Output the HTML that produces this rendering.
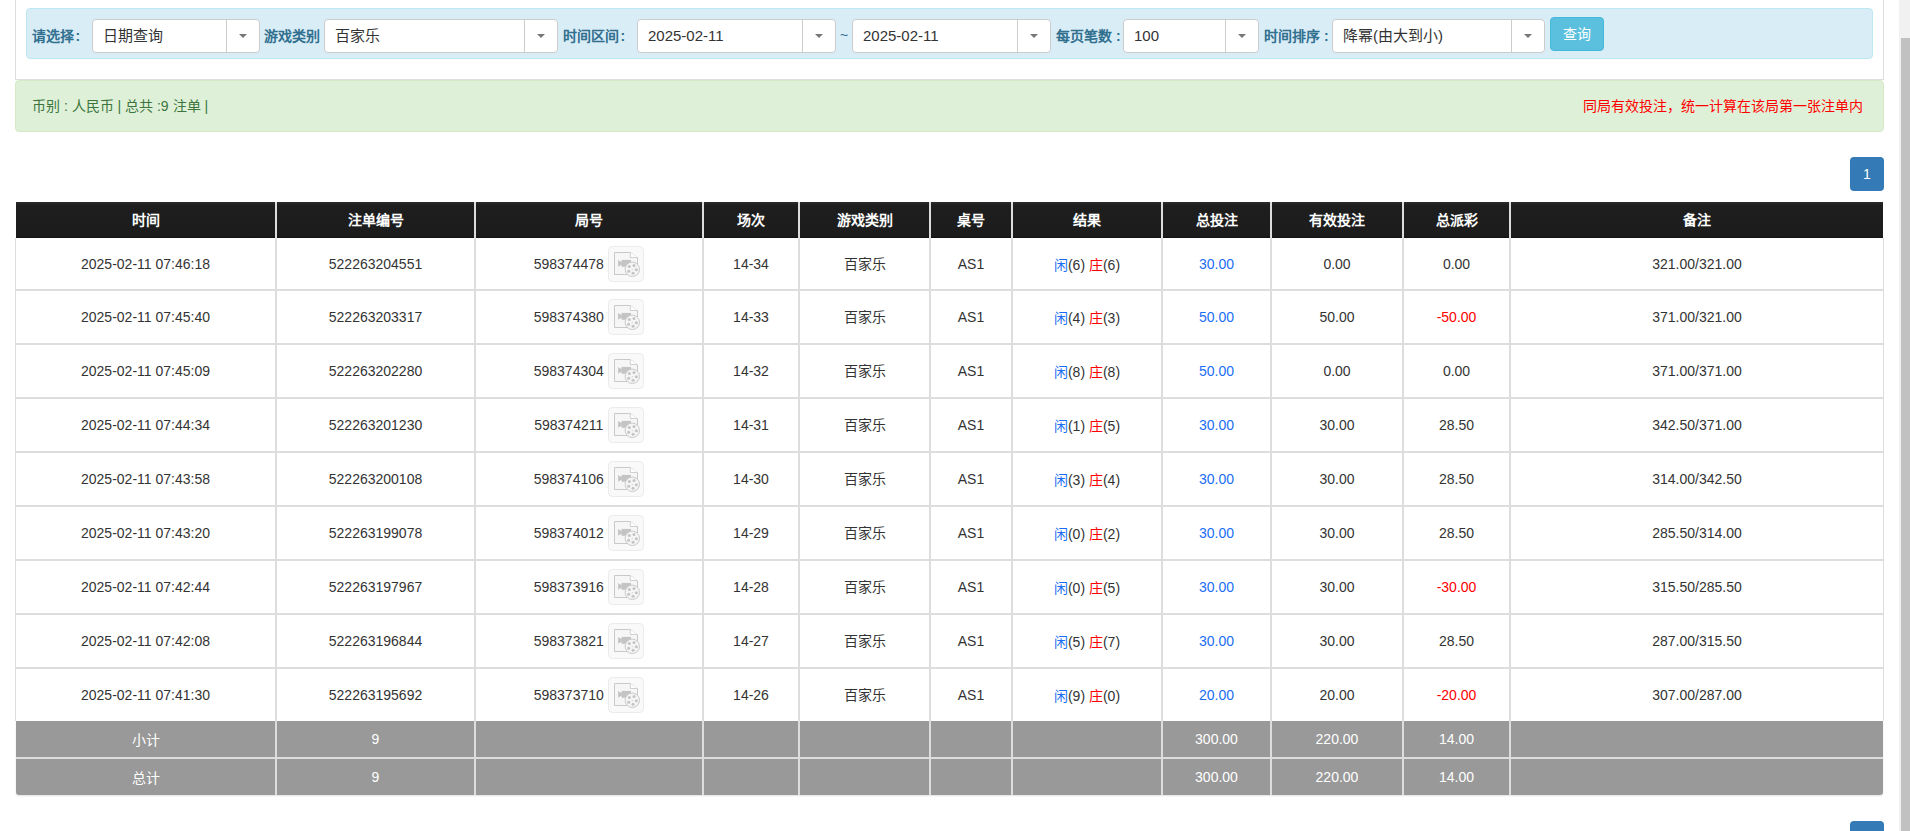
<!DOCTYPE html>
<html lang="zh-CN"><head><meta charset="utf-8"><title>注单</title>
<style>
html,body{margin:0;padding:0;background:#fff;overflow:hidden;width:1910px;height:831px;}
body{font-family:"Liberation Sans",sans-serif;font-size:14px;color:#333;position:relative;}
.a{position:absolute;box-sizing:border-box;}
.lbl{position:absolute;font-weight:bold;color:#31708f;font-size:14px;line-height:20px;white-space:nowrap;}
.lbl i{font-style:normal;margin-left:1.5px;}
.sel{position:absolute;box-sizing:border-box;background:#fff;border:1px solid #ccc;border-radius:4px;height:34px;}
.sel .t{position:absolute;left:10px;top:7px;font-size:15px;line-height:18px;color:#333;white-space:nowrap;}
.sel .dv{position:absolute;top:0;bottom:0;width:1px;background:#ccc;}
.sel .ar{position:absolute;top:14px;width:0;height:0;border-left:4px solid transparent;border-right:4px solid transparent;border-top:4px solid #777;}
.cell{position:absolute;display:flex;align-items:center;justify-content:center;white-space:nowrap;}
.hd{color:#fff;font-weight:bold;}
.up{font-style:normal;position:relative;top:-1px;}
.fx{display:flex;align-items:center;font-weight:normal;}
.vl{position:absolute;background:#ddd;}
.bl{color:#1a6ef5;}
.rd{color:#f00;}
.ft{color:#fff;}
.ico{display:inline-block;width:36px;height:36px;margin-left:4.5px;position:relative;vertical-align:middle;}
.ico svg{position:absolute;left:0;top:0;}
</style></head><body>

<div class="a" style="left:1899px;top:0;width:11px;height:831px;background:#f1f1f1;"></div>
<div class="a" style="left:1901px;top:38px;width:9px;height:793px;background:#c1c1c1;"></div>
<div class="a" style="left:15px;top:-5px;width:1869px;height:85px;border:1px solid #ddd;border-top:none;"></div>
<div class="a" style="left:26px;top:8px;width:1847px;height:51px;background:#d9edf7;border:1px solid #bce8f1;border-radius:4px;"></div>
<div class="lbl" style="left:32px;top:26px;">请选择<i>:</i></div>
<div class="lbl" style="left:264px;top:26px;">游戏类别</div>
<div class="lbl" style="left:563px;top:26px;">时间区间<i>:</i></div>
<div class="a" style="left:840px;top:25px;color:#31708f;line-height:20px;">~</div>
<div class="lbl" style="left:1056px;top:26px;">每页笔数 :</div>
<div class="lbl" style="left:1264px;top:26px;">时间排序 :</div>
<div class="sel" style="left:92px;top:19px;width:168px;"><span class="t">日期查询</span><span class="dv" style="left:133px"></span><span class="ar" style="left:146px"></span></div>
<div class="sel" style="left:324px;top:19px;width:234px;"><span class="t">百家乐</span><span class="dv" style="left:199px"></span><span class="ar" style="left:212px"></span></div>
<div class="sel" style="left:637px;top:19px;width:199px;"><span class="t">2025-02-11</span><span class="dv" style="left:164px"></span><span class="ar" style="left:177px"></span></div>
<div class="sel" style="left:852px;top:19px;width:199px;"><span class="t">2025-02-11</span><span class="dv" style="left:164px"></span><span class="ar" style="left:177px"></span></div>
<div class="sel" style="left:1123px;top:19px;width:136px;"><span class="t">100</span><span class="dv" style="left:101px"></span><span class="ar" style="left:114px"></span></div>
<div class="sel" style="left:1332px;top:19px;width:213px;"><span class="t">降幂(由大到小)</span><span class="dv" style="left:178px"></span><span class="ar" style="left:191px"></span></div>
<div class="a" style="left:1550px;top:17px;width:54px;height:34px;background:#5bc0de;border:1px solid #46b8da;border-radius:4px;color:#fff;font-size:14px;line-height:32px;text-align:center;">查询</div>
<div class="a" style="left:15px;top:80px;width:1869px;height:52px;background:#dff0d8;border:1px solid #d6e9c6;border-radius:4px;"></div>
<div class="a" style="left:32px;top:96px;color:#3c763d;line-height:20px;white-space:nowrap;">币别 : 人民币 | 总共 :9 注单 |</div>
<div class="a" style="left:1583px;top:96px;color:#f00;line-height:20px;white-space:nowrap;">同局有效投注，统一计算在该局第一张注单内</div>
<div class="a" style="left:1850px;top:157px;width:34px;height:34px;background:#337ab7;border-radius:4px;color:#fff;line-height:34px;text-align:center;">1</div>
<div class="a" style="left:1850px;top:821px;width:34px;height:34px;background:#337ab7;border-radius:4px;color:#fff;line-height:34px;text-align:center;">1</div>
<div class="a" style="left:16px;top:202px;width:1867px;height:36px;background:linear-gradient(#2c2c2c 0,#1e1e1e 3px,#1c1c1c 34px,#101010 36px);"></div>
<div class="a" style="left:16px;top:721px;width:1867px;height:74px;background:#999;border-radius:0 0 3px 3px;box-shadow:0 1px 2px rgba(0,0,0,.12);"></div>
<div class="vl" style="left:16px;top:289px;width:1867px;height:2px;"></div>
<div class="vl" style="left:16px;top:343px;width:1867px;height:2px;"></div>
<div class="vl" style="left:16px;top:397px;width:1867px;height:2px;"></div>
<div class="vl" style="left:16px;top:451px;width:1867px;height:2px;"></div>
<div class="vl" style="left:16px;top:505px;width:1867px;height:2px;"></div>
<div class="vl" style="left:16px;top:559px;width:1867px;height:2px;"></div>
<div class="vl" style="left:16px;top:613px;width:1867px;height:2px;"></div>
<div class="vl" style="left:16px;top:667px;width:1867px;height:2px;"></div>
<div class="vl" style="left:16px;top:757px;width:1867px;height:2px;"></div>
<div class="vl" style="left:15px;top:238px;width:1px;height:483px;"></div>
<div class="vl" style="left:275px;top:202px;width:2px;height:593px;"></div>
<div class="vl" style="left:474px;top:202px;width:2px;height:593px;"></div>
<div class="vl" style="left:702px;top:202px;width:2px;height:593px;"></div>
<div class="vl" style="left:798px;top:202px;width:2px;height:593px;"></div>
<div class="vl" style="left:929px;top:202px;width:2px;height:593px;"></div>
<div class="vl" style="left:1011px;top:202px;width:2px;height:593px;"></div>
<div class="vl" style="left:1161px;top:202px;width:2px;height:593px;"></div>
<div class="vl" style="left:1270px;top:202px;width:2px;height:593px;"></div>
<div class="vl" style="left:1402px;top:202px;width:2px;height:593px;"></div>
<div class="vl" style="left:1509px;top:202px;width:2px;height:593px;"></div>
<div class="vl" style="left:1883px;top:238px;width:1px;height:483px;"></div>
<div class="cell hd" style="left:16px;top:201px;width:259px;height:36px;">时间</div>
<div class="cell hd" style="left:277px;top:201px;width:197px;height:36px;">注单编号</div>
<div class="cell hd" style="left:476px;top:201px;width:226px;height:36px;">局号</div>
<div class="cell hd" style="left:704px;top:201px;width:94px;height:36px;">场次</div>
<div class="cell hd" style="left:800px;top:201px;width:129px;height:36px;">游戏类别</div>
<div class="cell hd" style="left:931px;top:201px;width:80px;height:36px;">桌号</div>
<div class="cell hd" style="left:1013px;top:201px;width:148px;height:36px;">结果</div>
<div class="cell hd" style="left:1163px;top:201px;width:107px;height:36px;">总投注</div>
<div class="cell hd" style="left:1272px;top:201px;width:130px;height:36px;">有效投注</div>
<div class="cell hd" style="left:1404px;top:201px;width:105px;height:36px;">总派彩</div>
<div class="cell hd" style="left:1511px;top:201px;width:372px;height:36px;">备注</div>
<div class="cell" style="left:16px;top:238px;width:259px;height:51px;"><span>2025-02-11 07:46:18</span></div>
<div class="cell" style="left:277px;top:238px;width:197px;height:51px;"><span>522263204551</span></div>
<div class="cell" style="left:476px;top:238px;width:226px;height:51px;"><span><b class="fx">598374478<span class="ico"><svg width="36" height="36" viewBox="0 0 36 36"><rect x="0.5" y="0.5" width="35" height="35" rx="4" fill="#f9f9f9" stroke="#ebebeb"/><path d="M6.5 6.5H22.3L29.5 11.9V28.5H6.5Z" fill="#f6f6f6" stroke="#c9c9c9"/><path d="M22.3 6.5V11.5H29.5" fill="#fff" stroke="#cfcfcf"/><rect x="13.6" y="13.9" width="9.4" height="6.9" fill="#c4c4c4"/><path d="M10.1 14.1L12.3 15.6H13.8V19.2H12.3L10.1 20.7Z" fill="#c4c4c4"/><circle cx="24.3" cy="23.3" r="7.2" fill="#f5f5f5" stroke="#cacaca"/><circle cx="21.30" cy="20.50" r="1.5" fill="#c4c4c4"/><circle cx="26.03" cy="19.58" r="1.5" fill="#c4c4c4"/><circle cx="28.37" cy="23.80" r="1.5" fill="#c4c4c4"/><circle cx="25.08" cy="27.32" r="1.5" fill="#c4c4c4"/><circle cx="20.71" cy="25.29" r="1.5" fill="#c4c4c4"/><rect x="23.6" y="23" width="1.4" height="0.8" fill="#ccc"/></svg></span></b></span></div>
<div class="cell" style="left:704px;top:238px;width:94px;height:51px;"><span>14-34</span></div>
<div class="cell" style="left:800px;top:238px;width:129px;height:51px;"><span><i class="up">百家乐</i></span></div>
<div class="cell" style="left:931px;top:238px;width:80px;height:51px;"><span>AS1</span></div>
<div class="cell" style="left:1013px;top:238px;width:148px;height:51px;"><span><span class="bl">闲</span>(6) <span class="rd">庄</span>(6)</span></div>
<div class="cell" style="left:1163px;top:238px;width:107px;height:51px;"><span><span class="bl">30.00</span></span></div>
<div class="cell" style="left:1272px;top:238px;width:130px;height:51px;"><span>0.00</span></div>
<div class="cell" style="left:1404px;top:238px;width:105px;height:51px;"><span>0.00</span></div>
<div class="cell" style="left:1511px;top:238px;width:372px;height:51px;"><span>321.00/321.00</span></div>
<div class="cell" style="left:16px;top:291px;width:259px;height:52px;"><span>2025-02-11 07:45:40</span></div>
<div class="cell" style="left:277px;top:291px;width:197px;height:52px;"><span>522263203317</span></div>
<div class="cell" style="left:476px;top:291px;width:226px;height:52px;"><span><b class="fx">598374380<span class="ico"><svg width="36" height="36" viewBox="0 0 36 36"><rect x="0.5" y="0.5" width="35" height="35" rx="4" fill="#f9f9f9" stroke="#ebebeb"/><path d="M6.5 6.5H22.3L29.5 11.9V28.5H6.5Z" fill="#f6f6f6" stroke="#c9c9c9"/><path d="M22.3 6.5V11.5H29.5" fill="#fff" stroke="#cfcfcf"/><rect x="13.6" y="13.9" width="9.4" height="6.9" fill="#c4c4c4"/><path d="M10.1 14.1L12.3 15.6H13.8V19.2H12.3L10.1 20.7Z" fill="#c4c4c4"/><circle cx="24.3" cy="23.3" r="7.2" fill="#f5f5f5" stroke="#cacaca"/><circle cx="21.30" cy="20.50" r="1.5" fill="#c4c4c4"/><circle cx="26.03" cy="19.58" r="1.5" fill="#c4c4c4"/><circle cx="28.37" cy="23.80" r="1.5" fill="#c4c4c4"/><circle cx="25.08" cy="27.32" r="1.5" fill="#c4c4c4"/><circle cx="20.71" cy="25.29" r="1.5" fill="#c4c4c4"/><rect x="23.6" y="23" width="1.4" height="0.8" fill="#ccc"/></svg></span></b></span></div>
<div class="cell" style="left:704px;top:291px;width:94px;height:52px;"><span>14-33</span></div>
<div class="cell" style="left:800px;top:291px;width:129px;height:52px;"><span><i class="up">百家乐</i></span></div>
<div class="cell" style="left:931px;top:291px;width:80px;height:52px;"><span>AS1</span></div>
<div class="cell" style="left:1013px;top:291px;width:148px;height:52px;"><span><span class="bl">闲</span>(4) <span class="rd">庄</span>(3)</span></div>
<div class="cell" style="left:1163px;top:291px;width:107px;height:52px;"><span><span class="bl">50.00</span></span></div>
<div class="cell" style="left:1272px;top:291px;width:130px;height:52px;"><span>50.00</span></div>
<div class="cell" style="left:1404px;top:291px;width:105px;height:52px;"><span><span class="rd">-50.00</span></span></div>
<div class="cell" style="left:1511px;top:291px;width:372px;height:52px;"><span>371.00/321.00</span></div>
<div class="cell" style="left:16px;top:345px;width:259px;height:52px;"><span>2025-02-11 07:45:09</span></div>
<div class="cell" style="left:277px;top:345px;width:197px;height:52px;"><span>522263202280</span></div>
<div class="cell" style="left:476px;top:345px;width:226px;height:52px;"><span><b class="fx">598374304<span class="ico"><svg width="36" height="36" viewBox="0 0 36 36"><rect x="0.5" y="0.5" width="35" height="35" rx="4" fill="#f9f9f9" stroke="#ebebeb"/><path d="M6.5 6.5H22.3L29.5 11.9V28.5H6.5Z" fill="#f6f6f6" stroke="#c9c9c9"/><path d="M22.3 6.5V11.5H29.5" fill="#fff" stroke="#cfcfcf"/><rect x="13.6" y="13.9" width="9.4" height="6.9" fill="#c4c4c4"/><path d="M10.1 14.1L12.3 15.6H13.8V19.2H12.3L10.1 20.7Z" fill="#c4c4c4"/><circle cx="24.3" cy="23.3" r="7.2" fill="#f5f5f5" stroke="#cacaca"/><circle cx="21.30" cy="20.50" r="1.5" fill="#c4c4c4"/><circle cx="26.03" cy="19.58" r="1.5" fill="#c4c4c4"/><circle cx="28.37" cy="23.80" r="1.5" fill="#c4c4c4"/><circle cx="25.08" cy="27.32" r="1.5" fill="#c4c4c4"/><circle cx="20.71" cy="25.29" r="1.5" fill="#c4c4c4"/><rect x="23.6" y="23" width="1.4" height="0.8" fill="#ccc"/></svg></span></b></span></div>
<div class="cell" style="left:704px;top:345px;width:94px;height:52px;"><span>14-32</span></div>
<div class="cell" style="left:800px;top:345px;width:129px;height:52px;"><span><i class="up">百家乐</i></span></div>
<div class="cell" style="left:931px;top:345px;width:80px;height:52px;"><span>AS1</span></div>
<div class="cell" style="left:1013px;top:345px;width:148px;height:52px;"><span><span class="bl">闲</span>(8) <span class="rd">庄</span>(8)</span></div>
<div class="cell" style="left:1163px;top:345px;width:107px;height:52px;"><span><span class="bl">50.00</span></span></div>
<div class="cell" style="left:1272px;top:345px;width:130px;height:52px;"><span>0.00</span></div>
<div class="cell" style="left:1404px;top:345px;width:105px;height:52px;"><span>0.00</span></div>
<div class="cell" style="left:1511px;top:345px;width:372px;height:52px;"><span>371.00/371.00</span></div>
<div class="cell" style="left:16px;top:399px;width:259px;height:52px;"><span>2025-02-11 07:44:34</span></div>
<div class="cell" style="left:277px;top:399px;width:197px;height:52px;"><span>522263201230</span></div>
<div class="cell" style="left:476px;top:399px;width:226px;height:52px;"><span><b class="fx">598374211<span class="ico"><svg width="36" height="36" viewBox="0 0 36 36"><rect x="0.5" y="0.5" width="35" height="35" rx="4" fill="#f9f9f9" stroke="#ebebeb"/><path d="M6.5 6.5H22.3L29.5 11.9V28.5H6.5Z" fill="#f6f6f6" stroke="#c9c9c9"/><path d="M22.3 6.5V11.5H29.5" fill="#fff" stroke="#cfcfcf"/><rect x="13.6" y="13.9" width="9.4" height="6.9" fill="#c4c4c4"/><path d="M10.1 14.1L12.3 15.6H13.8V19.2H12.3L10.1 20.7Z" fill="#c4c4c4"/><circle cx="24.3" cy="23.3" r="7.2" fill="#f5f5f5" stroke="#cacaca"/><circle cx="21.30" cy="20.50" r="1.5" fill="#c4c4c4"/><circle cx="26.03" cy="19.58" r="1.5" fill="#c4c4c4"/><circle cx="28.37" cy="23.80" r="1.5" fill="#c4c4c4"/><circle cx="25.08" cy="27.32" r="1.5" fill="#c4c4c4"/><circle cx="20.71" cy="25.29" r="1.5" fill="#c4c4c4"/><rect x="23.6" y="23" width="1.4" height="0.8" fill="#ccc"/></svg></span></b></span></div>
<div class="cell" style="left:704px;top:399px;width:94px;height:52px;"><span>14-31</span></div>
<div class="cell" style="left:800px;top:399px;width:129px;height:52px;"><span><i class="up">百家乐</i></span></div>
<div class="cell" style="left:931px;top:399px;width:80px;height:52px;"><span>AS1</span></div>
<div class="cell" style="left:1013px;top:399px;width:148px;height:52px;"><span><span class="bl">闲</span>(1) <span class="rd">庄</span>(5)</span></div>
<div class="cell" style="left:1163px;top:399px;width:107px;height:52px;"><span><span class="bl">30.00</span></span></div>
<div class="cell" style="left:1272px;top:399px;width:130px;height:52px;"><span>30.00</span></div>
<div class="cell" style="left:1404px;top:399px;width:105px;height:52px;"><span>28.50</span></div>
<div class="cell" style="left:1511px;top:399px;width:372px;height:52px;"><span>342.50/371.00</span></div>
<div class="cell" style="left:16px;top:453px;width:259px;height:52px;"><span>2025-02-11 07:43:58</span></div>
<div class="cell" style="left:277px;top:453px;width:197px;height:52px;"><span>522263200108</span></div>
<div class="cell" style="left:476px;top:453px;width:226px;height:52px;"><span><b class="fx">598374106<span class="ico"><svg width="36" height="36" viewBox="0 0 36 36"><rect x="0.5" y="0.5" width="35" height="35" rx="4" fill="#f9f9f9" stroke="#ebebeb"/><path d="M6.5 6.5H22.3L29.5 11.9V28.5H6.5Z" fill="#f6f6f6" stroke="#c9c9c9"/><path d="M22.3 6.5V11.5H29.5" fill="#fff" stroke="#cfcfcf"/><rect x="13.6" y="13.9" width="9.4" height="6.9" fill="#c4c4c4"/><path d="M10.1 14.1L12.3 15.6H13.8V19.2H12.3L10.1 20.7Z" fill="#c4c4c4"/><circle cx="24.3" cy="23.3" r="7.2" fill="#f5f5f5" stroke="#cacaca"/><circle cx="21.30" cy="20.50" r="1.5" fill="#c4c4c4"/><circle cx="26.03" cy="19.58" r="1.5" fill="#c4c4c4"/><circle cx="28.37" cy="23.80" r="1.5" fill="#c4c4c4"/><circle cx="25.08" cy="27.32" r="1.5" fill="#c4c4c4"/><circle cx="20.71" cy="25.29" r="1.5" fill="#c4c4c4"/><rect x="23.6" y="23" width="1.4" height="0.8" fill="#ccc"/></svg></span></b></span></div>
<div class="cell" style="left:704px;top:453px;width:94px;height:52px;"><span>14-30</span></div>
<div class="cell" style="left:800px;top:453px;width:129px;height:52px;"><span><i class="up">百家乐</i></span></div>
<div class="cell" style="left:931px;top:453px;width:80px;height:52px;"><span>AS1</span></div>
<div class="cell" style="left:1013px;top:453px;width:148px;height:52px;"><span><span class="bl">闲</span>(3) <span class="rd">庄</span>(4)</span></div>
<div class="cell" style="left:1163px;top:453px;width:107px;height:52px;"><span><span class="bl">30.00</span></span></div>
<div class="cell" style="left:1272px;top:453px;width:130px;height:52px;"><span>30.00</span></div>
<div class="cell" style="left:1404px;top:453px;width:105px;height:52px;"><span>28.50</span></div>
<div class="cell" style="left:1511px;top:453px;width:372px;height:52px;"><span>314.00/342.50</span></div>
<div class="cell" style="left:16px;top:507px;width:259px;height:52px;"><span>2025-02-11 07:43:20</span></div>
<div class="cell" style="left:277px;top:507px;width:197px;height:52px;"><span>522263199078</span></div>
<div class="cell" style="left:476px;top:507px;width:226px;height:52px;"><span><b class="fx">598374012<span class="ico"><svg width="36" height="36" viewBox="0 0 36 36"><rect x="0.5" y="0.5" width="35" height="35" rx="4" fill="#f9f9f9" stroke="#ebebeb"/><path d="M6.5 6.5H22.3L29.5 11.9V28.5H6.5Z" fill="#f6f6f6" stroke="#c9c9c9"/><path d="M22.3 6.5V11.5H29.5" fill="#fff" stroke="#cfcfcf"/><rect x="13.6" y="13.9" width="9.4" height="6.9" fill="#c4c4c4"/><path d="M10.1 14.1L12.3 15.6H13.8V19.2H12.3L10.1 20.7Z" fill="#c4c4c4"/><circle cx="24.3" cy="23.3" r="7.2" fill="#f5f5f5" stroke="#cacaca"/><circle cx="21.30" cy="20.50" r="1.5" fill="#c4c4c4"/><circle cx="26.03" cy="19.58" r="1.5" fill="#c4c4c4"/><circle cx="28.37" cy="23.80" r="1.5" fill="#c4c4c4"/><circle cx="25.08" cy="27.32" r="1.5" fill="#c4c4c4"/><circle cx="20.71" cy="25.29" r="1.5" fill="#c4c4c4"/><rect x="23.6" y="23" width="1.4" height="0.8" fill="#ccc"/></svg></span></b></span></div>
<div class="cell" style="left:704px;top:507px;width:94px;height:52px;"><span>14-29</span></div>
<div class="cell" style="left:800px;top:507px;width:129px;height:52px;"><span><i class="up">百家乐</i></span></div>
<div class="cell" style="left:931px;top:507px;width:80px;height:52px;"><span>AS1</span></div>
<div class="cell" style="left:1013px;top:507px;width:148px;height:52px;"><span><span class="bl">闲</span>(0) <span class="rd">庄</span>(2)</span></div>
<div class="cell" style="left:1163px;top:507px;width:107px;height:52px;"><span><span class="bl">30.00</span></span></div>
<div class="cell" style="left:1272px;top:507px;width:130px;height:52px;"><span>30.00</span></div>
<div class="cell" style="left:1404px;top:507px;width:105px;height:52px;"><span>28.50</span></div>
<div class="cell" style="left:1511px;top:507px;width:372px;height:52px;"><span>285.50/314.00</span></div>
<div class="cell" style="left:16px;top:561px;width:259px;height:52px;"><span>2025-02-11 07:42:44</span></div>
<div class="cell" style="left:277px;top:561px;width:197px;height:52px;"><span>522263197967</span></div>
<div class="cell" style="left:476px;top:561px;width:226px;height:52px;"><span><b class="fx">598373916<span class="ico"><svg width="36" height="36" viewBox="0 0 36 36"><rect x="0.5" y="0.5" width="35" height="35" rx="4" fill="#f9f9f9" stroke="#ebebeb"/><path d="M6.5 6.5H22.3L29.5 11.9V28.5H6.5Z" fill="#f6f6f6" stroke="#c9c9c9"/><path d="M22.3 6.5V11.5H29.5" fill="#fff" stroke="#cfcfcf"/><rect x="13.6" y="13.9" width="9.4" height="6.9" fill="#c4c4c4"/><path d="M10.1 14.1L12.3 15.6H13.8V19.2H12.3L10.1 20.7Z" fill="#c4c4c4"/><circle cx="24.3" cy="23.3" r="7.2" fill="#f5f5f5" stroke="#cacaca"/><circle cx="21.30" cy="20.50" r="1.5" fill="#c4c4c4"/><circle cx="26.03" cy="19.58" r="1.5" fill="#c4c4c4"/><circle cx="28.37" cy="23.80" r="1.5" fill="#c4c4c4"/><circle cx="25.08" cy="27.32" r="1.5" fill="#c4c4c4"/><circle cx="20.71" cy="25.29" r="1.5" fill="#c4c4c4"/><rect x="23.6" y="23" width="1.4" height="0.8" fill="#ccc"/></svg></span></b></span></div>
<div class="cell" style="left:704px;top:561px;width:94px;height:52px;"><span>14-28</span></div>
<div class="cell" style="left:800px;top:561px;width:129px;height:52px;"><span><i class="up">百家乐</i></span></div>
<div class="cell" style="left:931px;top:561px;width:80px;height:52px;"><span>AS1</span></div>
<div class="cell" style="left:1013px;top:561px;width:148px;height:52px;"><span><span class="bl">闲</span>(0) <span class="rd">庄</span>(5)</span></div>
<div class="cell" style="left:1163px;top:561px;width:107px;height:52px;"><span><span class="bl">30.00</span></span></div>
<div class="cell" style="left:1272px;top:561px;width:130px;height:52px;"><span>30.00</span></div>
<div class="cell" style="left:1404px;top:561px;width:105px;height:52px;"><span><span class="rd">-30.00</span></span></div>
<div class="cell" style="left:1511px;top:561px;width:372px;height:52px;"><span>315.50/285.50</span></div>
<div class="cell" style="left:16px;top:615px;width:259px;height:52px;"><span>2025-02-11 07:42:08</span></div>
<div class="cell" style="left:277px;top:615px;width:197px;height:52px;"><span>522263196844</span></div>
<div class="cell" style="left:476px;top:615px;width:226px;height:52px;"><span><b class="fx">598373821<span class="ico"><svg width="36" height="36" viewBox="0 0 36 36"><rect x="0.5" y="0.5" width="35" height="35" rx="4" fill="#f9f9f9" stroke="#ebebeb"/><path d="M6.5 6.5H22.3L29.5 11.9V28.5H6.5Z" fill="#f6f6f6" stroke="#c9c9c9"/><path d="M22.3 6.5V11.5H29.5" fill="#fff" stroke="#cfcfcf"/><rect x="13.6" y="13.9" width="9.4" height="6.9" fill="#c4c4c4"/><path d="M10.1 14.1L12.3 15.6H13.8V19.2H12.3L10.1 20.7Z" fill="#c4c4c4"/><circle cx="24.3" cy="23.3" r="7.2" fill="#f5f5f5" stroke="#cacaca"/><circle cx="21.30" cy="20.50" r="1.5" fill="#c4c4c4"/><circle cx="26.03" cy="19.58" r="1.5" fill="#c4c4c4"/><circle cx="28.37" cy="23.80" r="1.5" fill="#c4c4c4"/><circle cx="25.08" cy="27.32" r="1.5" fill="#c4c4c4"/><circle cx="20.71" cy="25.29" r="1.5" fill="#c4c4c4"/><rect x="23.6" y="23" width="1.4" height="0.8" fill="#ccc"/></svg></span></b></span></div>
<div class="cell" style="left:704px;top:615px;width:94px;height:52px;"><span>14-27</span></div>
<div class="cell" style="left:800px;top:615px;width:129px;height:52px;"><span><i class="up">百家乐</i></span></div>
<div class="cell" style="left:931px;top:615px;width:80px;height:52px;"><span>AS1</span></div>
<div class="cell" style="left:1013px;top:615px;width:148px;height:52px;"><span><span class="bl">闲</span>(5) <span class="rd">庄</span>(7)</span></div>
<div class="cell" style="left:1163px;top:615px;width:107px;height:52px;"><span><span class="bl">30.00</span></span></div>
<div class="cell" style="left:1272px;top:615px;width:130px;height:52px;"><span>30.00</span></div>
<div class="cell" style="left:1404px;top:615px;width:105px;height:52px;"><span>28.50</span></div>
<div class="cell" style="left:1511px;top:615px;width:372px;height:52px;"><span>287.00/315.50</span></div>
<div class="cell" style="left:16px;top:669px;width:259px;height:52px;"><span>2025-02-11 07:41:30</span></div>
<div class="cell" style="left:277px;top:669px;width:197px;height:52px;"><span>522263195692</span></div>
<div class="cell" style="left:476px;top:669px;width:226px;height:52px;"><span><b class="fx">598373710<span class="ico"><svg width="36" height="36" viewBox="0 0 36 36"><rect x="0.5" y="0.5" width="35" height="35" rx="4" fill="#f9f9f9" stroke="#ebebeb"/><path d="M6.5 6.5H22.3L29.5 11.9V28.5H6.5Z" fill="#f6f6f6" stroke="#c9c9c9"/><path d="M22.3 6.5V11.5H29.5" fill="#fff" stroke="#cfcfcf"/><rect x="13.6" y="13.9" width="9.4" height="6.9" fill="#c4c4c4"/><path d="M10.1 14.1L12.3 15.6H13.8V19.2H12.3L10.1 20.7Z" fill="#c4c4c4"/><circle cx="24.3" cy="23.3" r="7.2" fill="#f5f5f5" stroke="#cacaca"/><circle cx="21.30" cy="20.50" r="1.5" fill="#c4c4c4"/><circle cx="26.03" cy="19.58" r="1.5" fill="#c4c4c4"/><circle cx="28.37" cy="23.80" r="1.5" fill="#c4c4c4"/><circle cx="25.08" cy="27.32" r="1.5" fill="#c4c4c4"/><circle cx="20.71" cy="25.29" r="1.5" fill="#c4c4c4"/><rect x="23.6" y="23" width="1.4" height="0.8" fill="#ccc"/></svg></span></b></span></div>
<div class="cell" style="left:704px;top:669px;width:94px;height:52px;"><span>14-26</span></div>
<div class="cell" style="left:800px;top:669px;width:129px;height:52px;"><span><i class="up">百家乐</i></span></div>
<div class="cell" style="left:931px;top:669px;width:80px;height:52px;"><span>AS1</span></div>
<div class="cell" style="left:1013px;top:669px;width:148px;height:52px;"><span><span class="bl">闲</span>(9) <span class="rd">庄</span>(0)</span></div>
<div class="cell" style="left:1163px;top:669px;width:107px;height:52px;"><span><span class="bl">20.00</span></span></div>
<div class="cell" style="left:1272px;top:669px;width:130px;height:52px;"><span>20.00</span></div>
<div class="cell" style="left:1404px;top:669px;width:105px;height:52px;"><span><span class="rd">-20.00</span></span></div>
<div class="cell" style="left:1511px;top:669px;width:372px;height:52px;"><span>307.00/287.00</span></div>
<div class="cell ft" style="left:16px;top:721px;width:259px;height:36px;">小计</div>
<div class="cell ft" style="left:277px;top:721px;width:197px;height:36px;">9</div>
<div class="cell ft" style="left:1163px;top:721px;width:107px;height:36px;">300.00</div>
<div class="cell ft" style="left:1272px;top:721px;width:130px;height:36px;">220.00</div>
<div class="cell ft" style="left:1404px;top:721px;width:105px;height:36px;">14.00</div>
<div class="cell ft" style="left:16px;top:759px;width:259px;height:36px;">总计</div>
<div class="cell ft" style="left:277px;top:759px;width:197px;height:36px;">9</div>
<div class="cell ft" style="left:1163px;top:759px;width:107px;height:36px;">300.00</div>
<div class="cell ft" style="left:1272px;top:759px;width:130px;height:36px;">220.00</div>
<div class="cell ft" style="left:1404px;top:759px;width:105px;height:36px;">14.00</div>
</body></html>
